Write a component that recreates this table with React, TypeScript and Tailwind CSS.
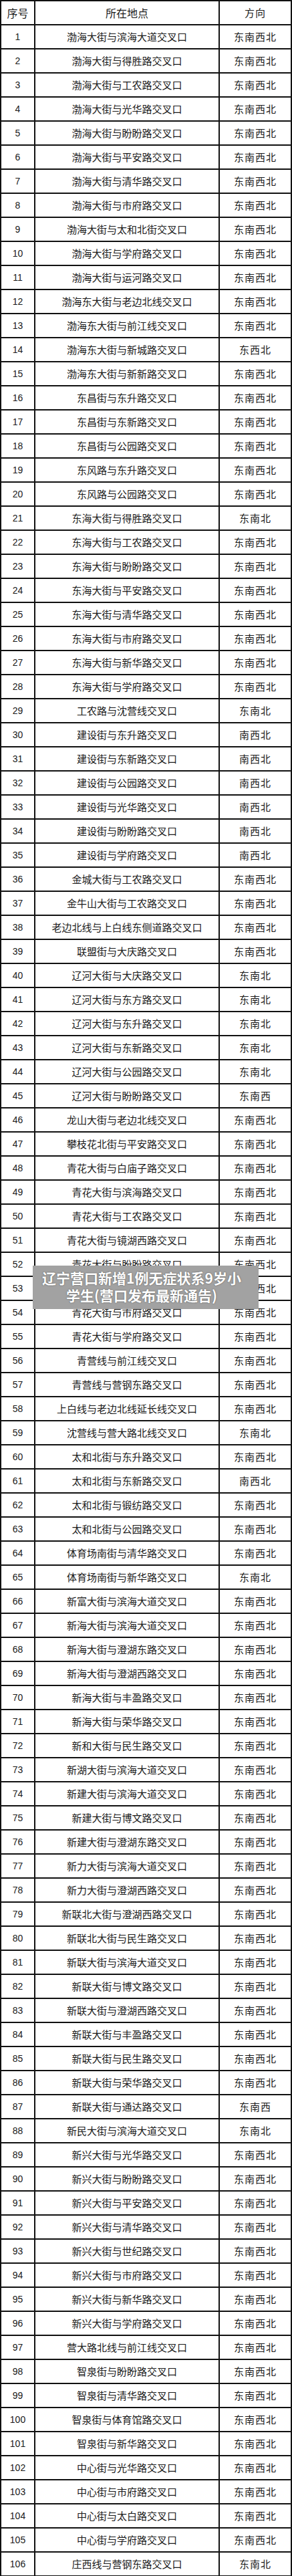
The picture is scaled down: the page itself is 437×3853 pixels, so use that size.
import React from 'react';

type Row = { place: string; dir: string };

const ALL = '东南西北';

// 路口数据: [地点, 方向] (方向为空时默认东南西北)
const raw: [string, string?][] = [
    ['渤海大街与滨海大道交叉口'],
    ['渤海大街与得胜路交叉口'],
    ['渤海大街与工农路交叉口'],
    ['渤海大街与光华路交叉口'],
    ['渤海大街与盼盼路交叉口'],
    ['渤海大街与平安路交叉口'],
    ['渤海大街与清华路交叉口'],
    ['渤海大街与市府路交叉口'],
    ['渤海大街与太和北街交叉口'],
    ['渤海大街与学府路交叉口'],
    ['渤海大街与运河路交叉口'],
    ['渤海东大街与老边北线交叉口'],
    ['渤海东大街与前江线交叉口'],
    ['渤海东大街与新城路交叉口', '东西北'],
    ['渤海东大街与新新路交叉口'],
    ['东昌街与东升路交叉口'],
    ['东昌街与东新路交叉口'],
    ['东昌街与公园路交叉口'],
    ['东风路与东升路交叉口'],
    ['东风路与公园路交叉口'],
    ['东海大街与得胜路交叉口', '东南北'],
    ['东海大街与工农路交叉口'],
    ['东海大街与盼盼路交叉口'],
    ['东海大街与平安路交叉口'],
    ['东海大街与清华路交叉口'],
    ['东海大街与市府路交叉口'],
    ['东海大街与新华路交叉口'],
    ['东海大街与学府路交叉口'],
    ['工农路与沈营线交叉口', '东南北'],
    ['建设街与东升路交叉口', '南西北'],
    ['建设街与东新路交叉口', '南西北'],
    ['建设街与公园路交叉口', '南西北'],
    ['建设街与光华路交叉口', '南西北'],
    ['建设街与盼盼路交叉口', '南西北'],
    ['建设街与学府路交叉口', '南西北'],
    ['金城大街与工农路交叉口'],
    ['金牛山大街与工农路交叉口'],
    ['老边北线与上白线东侧道路交叉口'],
    ['联盟街与大庆路交叉口'],
    ['辽河大街与大庆路交叉口', '东南北'],
    ['辽河大街与东方路交叉口', '东南北'],
    ['辽河大街与东升路交叉口', '东南北'],
    ['辽河大街与东新路交叉口', '东南北'],
    ['辽河大街与公园路交叉口', '东南北'],
    ['辽河大街与盼盼路交叉口', '东南西'],
    ['龙山大街与老边北线交叉口'],
    ['攀枝花北街与平安路交叉口'],
    ['青花大街与白庙子路交叉口'],
    ['青花大街与滨海路交叉口'],
    ['青花大街与工农路交叉口'],
    ['青花大街与镜湖西路交叉口'],
    ['青花大街与盼盼路交叉口'],
    ['青花大街与清华路交叉口'],
    ['青花大街与市府路交叉口'],
    ['青花大街与学府路交叉口'],
    ['青营线与前江线交叉口'],
    ['青营线与营钢东路交叉口'],
    ['上白线与老边北线延长线交叉口'],
    ['沈营线与营大路北线交叉口', '东南北'],
    ['太和北街与东升路交叉口'],
    ['太和北街与东新路交叉口', '南西北'],
    ['太和北街与锻纺路交叉口'],
    ['太和北街与公园路交叉口'],
    ['体育场南街与清华路交叉口'],
    ['体育场南街与新华路交叉口', '东南北'],
    ['新富大街与滨海大道交叉口'],
    ['新海大街与滨海大道交叉口'],
    ['新海大街与澄湖东路交叉口'],
    ['新海大街与澄湖西路交叉口'],
    ['新海大街与丰盈路交叉口'],
    ['新海大街与荣华路交叉口'],
    ['新和大街与民生路交叉口'],
    ['新湖大街与滨海大道交叉口'],
    ['新建大街与滨海大道交叉口'],
    ['新建大街与博文路交叉口'],
    ['新建大街与澄湖东路交叉口'],
    ['新力大街与滨海大道交叉口'],
    ['新力大街与澄湖西路交叉口'],
    ['新联北大街与澄湖西路交叉口'],
    ['新联北大街与民生路交叉口'],
    ['新联大街与滨海大道交叉口'],
    ['新联大街与博文路交叉口'],
    ['新联大街与澄湖西路交叉口'],
    ['新联大街与丰盈路交叉口'],
    ['新联大街与民生路交叉口'],
    ['新联大街与荣华路交叉口'],
    ['新联大街与通达路交叉口', '东南西'],
    ['新民大街与滨海大道交叉口', '东南北'],
    ['新兴大街与光华路交叉口'],
    ['新兴大街与盼盼路交叉口'],
    ['新兴大街与平安路交叉口'],
    ['新兴大街与清华路交叉口'],
    ['新兴大街与世纪路交叉口'],
    ['新兴大街与市府路交叉口'],
    ['新兴大街与新华路交叉口'],
    ['新兴大街与学府路交叉口'],
    ['营大路北线与前江线交叉口'],
    ['智泉街与盼盼路交叉口'],
    ['智泉街与清华路交叉口'],
    ['智泉街与体育馆路交叉口'],
    ['智泉街与新华路交叉口'],
    ['中心街与光华路交叉口'],
    ['中心街与市府路交叉口'],
    ['中心街与太白路交叉口'],
    ['中心街与学府路交叉口'],
    ['庄西线与营钢东路交叉口', '东南北'],
];

const rows: Row[] = raw.map(([place, dir]) => ({ place, dir: dir ?? ALL }));

const cjk = "font-['Noto_Sans_CJK_SC',sans-serif]";

const TableRow = ({ no, place, dir, header }: { no: string; place: string; dir: string; header?: boolean }) => (
    <div className="flex h-[36px]">
        <div className={`w-[51px] shrink-0 border-r-2 border-b-2 border-[#111] flex items-center justify-center ${header ? `${cjk} text-[16px]` : "font-['Liberation_Sans',sans-serif] text-[14px]"}`}>
            {no}
        </div>
        <div className={`w-[276px] shrink-0 border-r-2 border-b-2 border-[#111] flex items-center justify-center whitespace-nowrap ${cjk} ${header ? 'text-[16px]' : 'text-[15px]'}`}>
            {place}
        </div>
        <div className={`flex-1 border-r-2 border-b-2 border-[#111] flex items-center justify-center ${cjk} text-[15px] tracking-[1px]`}>
            {dir}
        </div>
    </div>
);

export default function App() {
    return (
        <div className="relative w-[437px] bg-white text-[#1a1a1a]">
            <div className="border-l-2 border-t-2 border-[#111]">
                <TableRow no="序号" place="所在地点" dir="方向" header />
                {rows.map((r, i) => (
                    <TableRow key={i} no={String(i + 1)} place={r.place} dir={r.dir} />
                ))}
            </div>

            {/* 新闻标题浮层 */}
            <div className={`absolute left-[49px] top-[1893px] w-[338px] h-[65px] bg-[#a2a2a2] pt-[5px] pr-3 flex flex-col items-center whitespace-nowrap text-white ${cjk} font-bold text-[21px] leading-[26px] [text-shadow:0_0_2px_#4b4b4b]`}>
                <div>辽宁营口新增1例无症状系9岁小</div>
                <div>学生(营口发布最新通告)</div>
            </div>
        </div>
    );
}
